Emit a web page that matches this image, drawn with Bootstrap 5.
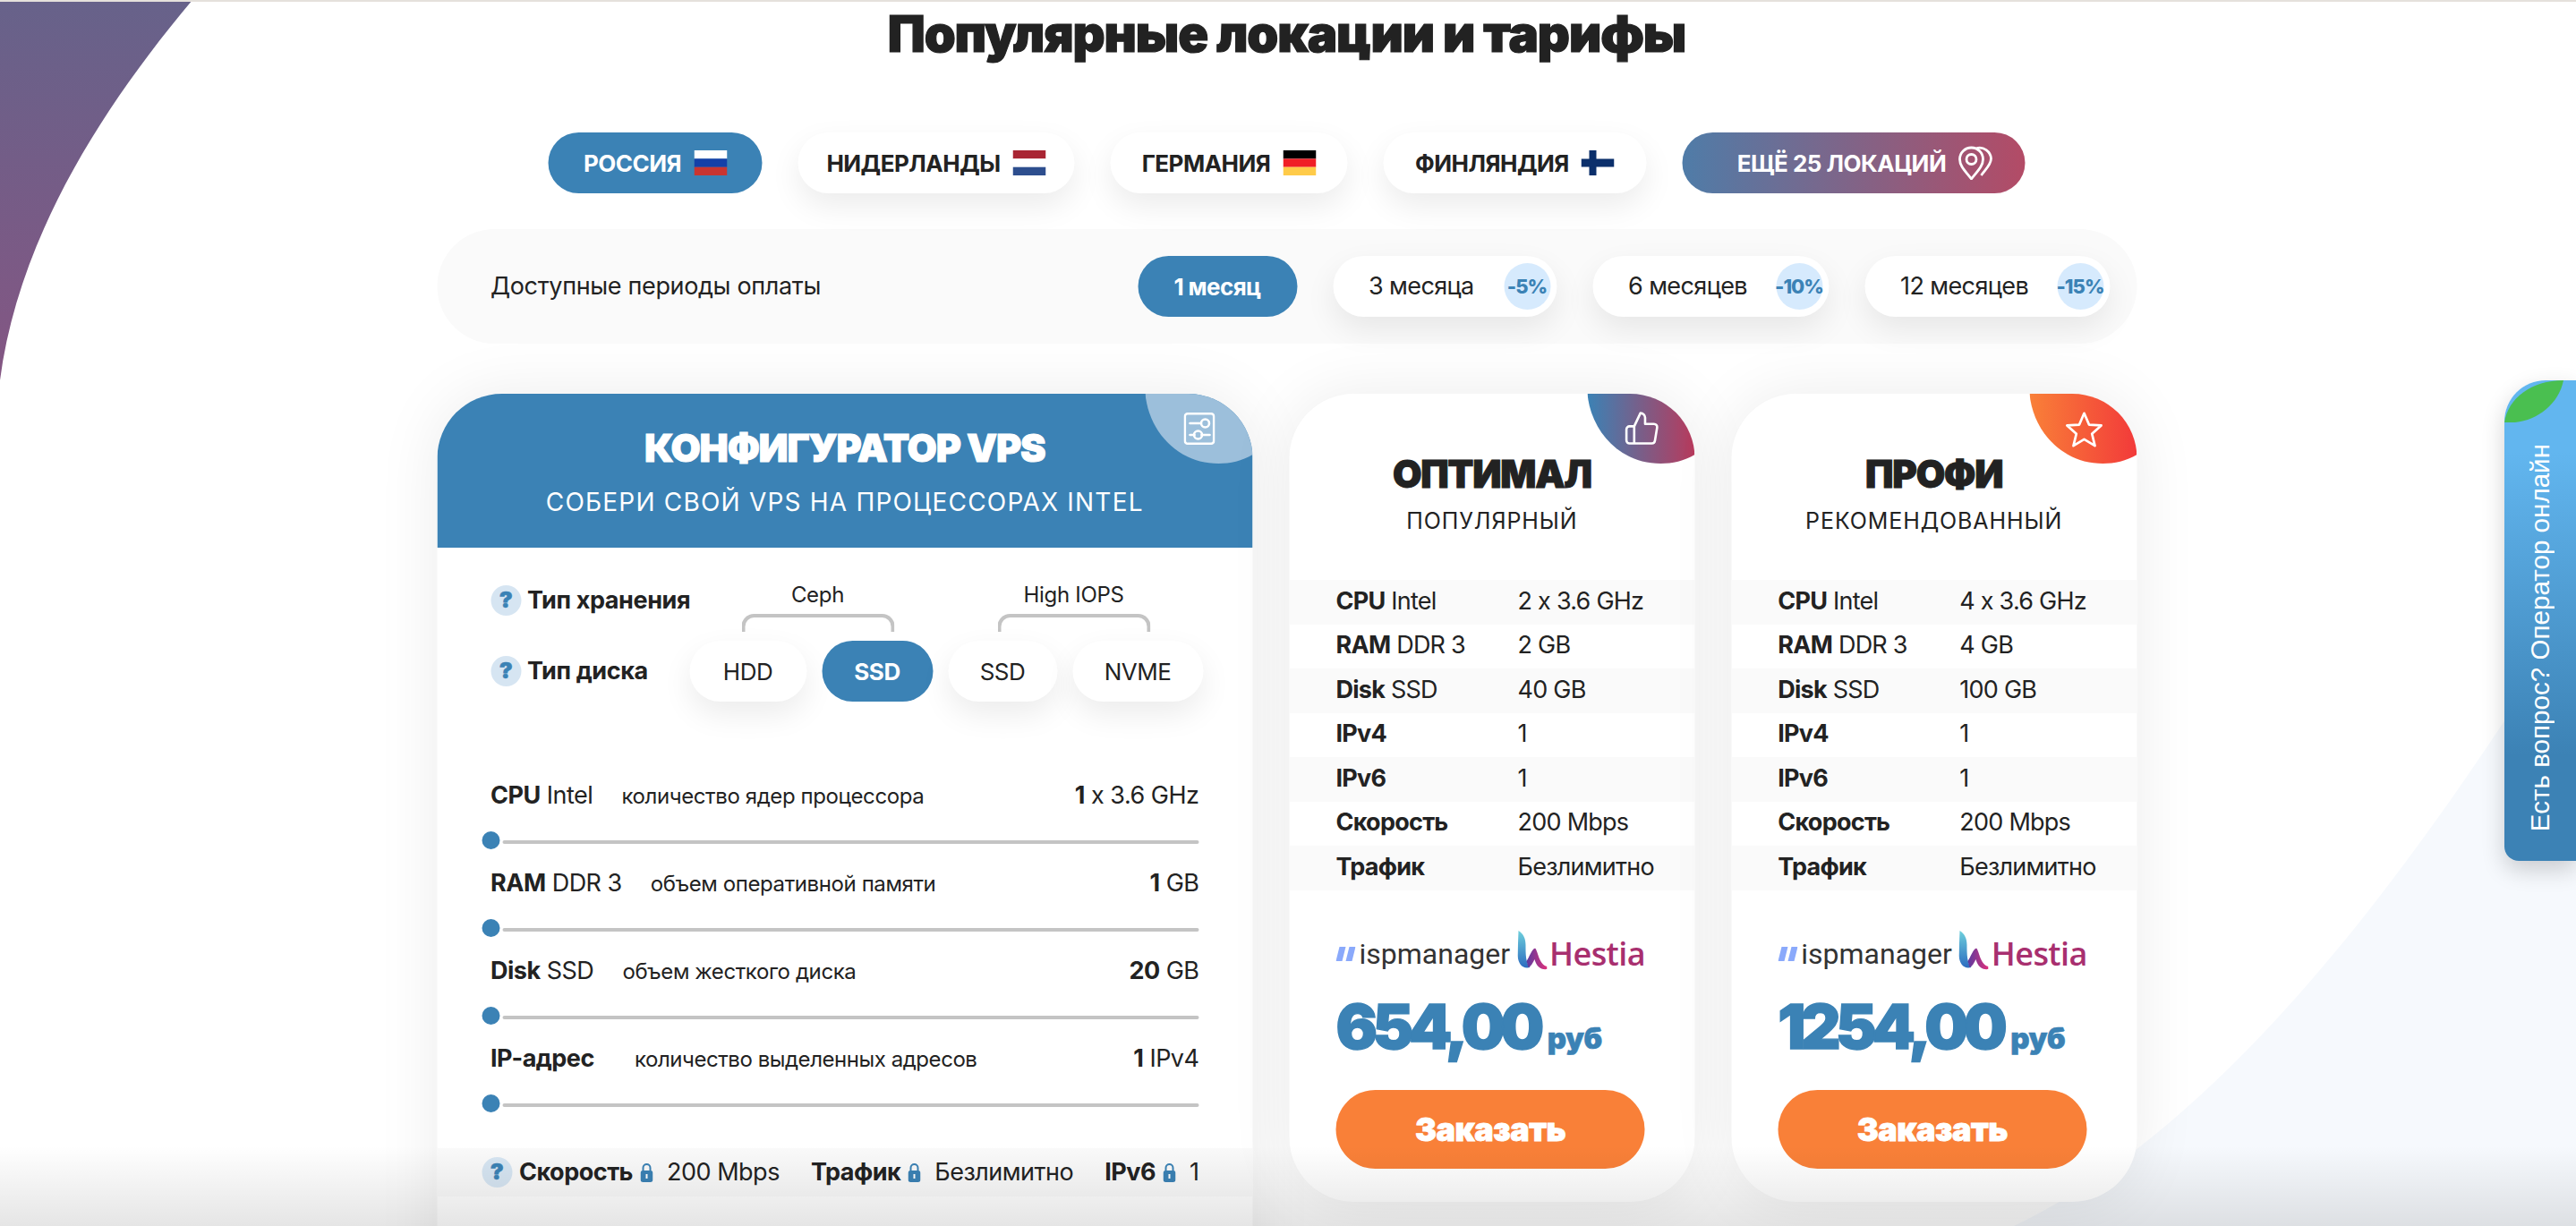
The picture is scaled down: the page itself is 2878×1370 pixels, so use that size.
<!DOCTYPE html>
<html lang="ru">
<head>
  <meta charset="UTF-8" />
  <title>Популярные локации и тарифы</title>
  <link href="https://cdn.jsdelivr.net/npm/bootstrap@5.3.0/dist/css/bootstrap.min.css" rel="stylesheet" />
  <style>
    html, body { height: 100%; overflow: hidden; }
    body {
      background: #fff;
      color: #222;
      font-family: Inter, "Noto Sans", sans-serif;
      position: relative;
    }
    .top-line { height: 2px; background: #e5e1dc; }
    .bg-shapes { position: absolute; left: 0; top: 0; width: 2878px; height: 1370px; z-index: 0; }
    .bottom-fade {
      position: absolute; left: 0; right: 0; bottom: 0; height: 90px; z-index: 5;
      background: linear-gradient(rgba(0,0,0,0), rgba(0,0,0,.1));
      pointer-events: none;
    }
    .page-wrap { width: 1899px; margin: 0 auto; padding-right: 0; position: relative; z-index: 1; transform: translateX(-1.5px); }
    .page-title {
      font-size: 56px; font-weight: 900; line-height: 72px; margin: 0; text-align: center; color: #222;
      letter-spacing: -1.1px; -webkit-text-stroke: 1.2px #222;
    }

    .pill {
      height: 68px; border-radius: 34px; background: #fff; border: 0; color: #222;
      box-shadow: 0 14px 34px rgba(0,0,0,.08);
      display: inline-flex; align-items: center; justify-content: center;
      white-space: nowrap; flex: none;
    }
    .pill-active { background: #3b82b5; color: #fff; box-shadow: none; }
    .loc-row { margin-top: 74px; gap: 40px; }
    .loc-pill { font-size: 26px; font-weight: 700; gap: 14px; letter-spacing: -.5px; }
    .loc-more { background: linear-gradient(90deg, #4f7ca8, #b34b66); color: #fff; box-shadow: none; padding-left: 25px; }
    .loc-more svg { margin-left: -1px; }
    .w-239 { width: 239px; } .w-309 { width: 309px; } .w-265 { width: 265px; } .w-294 { width: 294px; } .w-383 { width: 383px; }
    .flag { width: 37px; height: 28px; flex: none; display: block; }

    .period-band {
      margin-top: 40px; height: 128px; border-radius: 64px; background: #fafafa;
      padding: 0 30px 0 60px;
    }
    .period-label { font-size: 27px; letter-spacing: -.35px; }
    .period-list { gap: 40px; }
    .period-pill { font-size: 27px; padding: 0 7px 0 40px; justify-content: space-between; letter-spacing: -.6px; }
    .period-pill.pill-active { font-weight: 700; padding: 0; justify-content: center; font-size: 26px; }
    .w-178 { width: 178px; } .w-250 { width: 250px; } .w-264 { width: 264px; } .w-274 { width: 274px; }
    .sale-badge {
      width: 52px; height: 52px; border-radius: 50%; background: #d6eafd; color: #3b82b5;
      font-size: 22px; font-weight: 800; letter-spacing: -1px;
      display: flex; align-items: center; justify-content: center; flex: none;
    }

    .cards-row { margin-top: 56px; gap: 41px; align-items: flex-start; }
    .price-card {
      border: 0; border-radius: 72px; background: #fff; overflow: hidden;
      box-shadow: 0 0 70px rgba(0,0,0,.08);
    }
    .corner-leaf { position: absolute; top: 0; right: 0; width: 120px; height: 78px; }
    .corner-icon { position: absolute; }

    .config-card { width: 912px; height: 1100px; }
    .config-head { height: 172px; background: #3b82b5; color: #fff; text-align: center; padding-top: 38px; }
    .config-title { font-size: 43px; font-weight: 900; line-height: 44px; letter-spacing: -1.2px; -webkit-text-stroke: 1px #fff; }
    .config-sub { font-size: 28px; line-height: 34px; margin-top: 22px; letter-spacing: 1.2px; }
    .config-body { padding: 38px 60px 0; }
    .help-dot {
      width: 34px; height: 34px; border-radius: 50%; background: #d6e5f2; color: #3b82b5;
      font-size: 25px; font-weight: 900; -webkit-text-stroke: .6px #3b82b5; display: inline-flex; align-items: center; justify-content: center; flex: none;
    }
    .opt-label { font-size: 27px; font-weight: 700; gap: 7px; width: 222px; letter-spacing: -.4px; height: 34px; flex: none; white-space: nowrap; }
    .store-group { width: 171px; text-align: center; font-size: 24px; line-height: 30px; letter-spacing: -.3px; white-space: nowrap; }
    .store-bracket { height: 20px; margin-top: 6px; border: 4px solid #c4c4c4; border-bottom: 0; border-radius: 14px 14px 0 0; }
    .disk-row { margin-top: 10px; }
    .disk-list { gap: 17px; }
    .disk-pill { font-size: 26px; letter-spacing: -.5px; }
    .disk-pill.pill-active { font-weight: 700; }
    .w-131 { width: 131px; } .w-124 { width: 124px; } .w-122 { width: 122px; } .w-146 { width: 146px; }

    .sliders { margin-top: 87px; }
    .slider-row { margin-bottom: 20px; }
    .slider-text { height: 36px; font-size: 27px; line-height: 36px; white-space: nowrap; letter-spacing: -.5px; }
    .slider-text b { font-weight: 700; }
    .slider-desc { font-size: 24px; margin-left: 25px; letter-spacing: -.4px; }
    .slider-desc-wide { margin-left: 38px; letter-spacing: -.45px; }
    .slider-line { margin-top: 22px; margin-left: -10px; gap: 3px; }
    .slider-thumb { width: 20px; height: 20px; border-radius: 50%; background: #3b82b5; flex: none; }
    .slider-track { height: 4px; background: #c4c4c4; border-radius: 2px; flex-grow: 1; margin-top: 4px; }
    .config-foot {
      height: 54px; margin-top: 20px; background: #fafafa; padding: 0 60px 0 50px;
      font-size: 27px; white-space: nowrap; letter-spacing: -.5px;
    }
    .config-foot b { font-weight: 700; }
    .lock-ico { width: 14px; height: 22px; flex: none; }

    .plan-card { width: 453px; height: 903px; padding-top: 68px; }
    .plan-title { font-size: 42px; font-weight: 900; line-height: 44px; text-align: center; letter-spacing: -1.2px; -webkit-text-stroke: 1px #222; }
    .plan-sub { font-size: 25px; line-height: 44px; margin-top: 8px; text-align: center; letter-spacing: .9px; }
    .spec-list { margin-top: 44px; }
    .spec-line { height: 49.5px; padding-left: 52px; padding-bottom: 2px; font-size: 27px; white-space: nowrap; letter-spacing: -.75px; }
    .spec-line:nth-child(odd) { background: #fafafa; }
    .spec-line b { font-weight: 700; }
    .spec-name { width: 203px; flex: none; }
    .plan-foot { padding: 45px 52px 0; }
    .panel-logos { height: 44px; white-space: nowrap; }
    .isp-name { font-family: Roboto, sans-serif; font-size: 32px; color: #333; margin-left: 4px; line-height: 44px; padding-top: 8px; }
    .hestia-name { font-family: "Open Sans", sans-serif; font-weight: 600; font-size: 36px; color: #a82f6f; margin-left: 3px; letter-spacing: -.6px; line-height: 44px; padding-top: 8px; }
    .plan-price { margin-top: 25px; color: #3b82b5; font-weight: 900; font-size: 69px; line-height: 76px; white-space: nowrap; letter-spacing: -5.5px; -webkit-text-stroke: 1.4px #3b82b5; }
    .plan-price span { font-size: 33px; letter-spacing: -.5px; margin-left: 9px; -webkit-text-stroke: .6px #3b82b5; }
    .order-btn {
      margin-top: 20px; width: 345px; height: 88px; border-radius: 44px; border: 0;
      background: #f98038; color: #fff; font-size: 36px; font-weight: 900; letter-spacing: -.5px; -webkit-text-stroke: .8px #fff;
    }
    .order-btn:hover { background: #f98038; color: #fff; }

    .chat-tab {
      position: absolute; right: 0; top: 425px; width: 80px; height: 537px; z-index: 3;
      border-radius: 46px 0 0 16px; overflow: hidden;
      background: linear-gradient(#62b6ef 15%, #3c82b5 78%);
      box-shadow: 0 10px 26px rgba(0,0,0,.18);
      display: flex; align-items: flex-end; justify-content: center;
    }
    .chat-leaf { position: absolute; left: 0; top: 0; width: 66px; height: 47px; }
    .chat-text {
      writing-mode: vertical-rl; transform: rotate(180deg);
      color: #fff; font-family: "Liberation Sans", Arial, sans-serif; font-size: 29.6px; line-height: 40px;
      margin-bottom: 33px; white-space: nowrap;
    }
  </style>
</head>
<body>
  <svg class="bg-shapes" viewBox="0 0 2878 1370" aria-hidden="true">
    <defs>
      <linearGradient id="purpleBg" x1="0" y1="0" x2="0" y2="1">
        <stop offset="0" stop-color="#67628a" /><stop offset="1" stop-color="#845683" />
      </linearGradient>
    </defs>
    <path d="M0 0H215C110 125 20 270 0 425Z" fill="url(#purpleBg)" />
    <path d="M2250 1370C2480 1260 2690 985 2878 680V1370Z" fill="#f6f9fd" />
  </svg>

  <div class="top-line position-relative"></div>

  <div class="page-wrap">
    <h1 class="page-title">Популярные локации и тарифы</h1>

    <div class="loc-row d-flex justify-content-center">
      <a class="pill loc-pill w-239 pill-active text-decoration-none">РОССИЯ
        <svg class="flag" viewBox="0 0 37 28"><rect width="37" height="9.4" fill="#fff" /><rect y="9.4" width="37" height="9.3" fill="#1440a8" /><rect y="18.7" width="37" height="9.3" fill="#c93530" /></svg>
      </a>
      <a class="pill loc-pill w-309 text-decoration-none">НИДЕРЛАНДЫ
        <svg class="flag" viewBox="0 0 37 28"><rect width="37" height="9.4" fill="#a92533" /><rect y="9.4" width="37" height="9.3" fill="#fff" /><rect y="18.7" width="37" height="9.3" fill="#2d4e8e" /></svg>
      </a>
      <a class="pill loc-pill w-265 text-decoration-none">ГЕРМАНИЯ
        <svg class="flag" viewBox="0 0 37 28"><rect width="37" height="9.4" fill="#000" /><rect y="9.4" width="37" height="9.3" fill="#f01f26" /><rect y="18.7" width="37" height="9.3" fill="#ffcb49" /></svg>
      </a>
      <a class="pill loc-pill w-294 text-decoration-none">ФИНЛЯНДИЯ
        <svg class="flag" viewBox="0 0 37 28"><rect width="37" height="28" fill="#fff" /><rect x="9" width="8" height="28" fill="#0b2f6b" /><rect y="9.5" width="37" height="9" fill="#0b2f6b" /></svg>
      </a>
      <a class="pill loc-pill loc-more w-383 text-decoration-none">ЕЩЁ 25 ЛОКАЦИЙ
        <svg width="39" height="38" viewBox="0 0 39 38" fill="none" stroke="#fff" stroke-width="2.8"><path d="M15 37C9 29 2 23 2 15A13 13 0 0 1 28 15C28 23 21 29 15 37Z" /><circle cx="15" cy="15" r="5.5" /><path d="M21 2.5A13 13 0 0 1 37 14C37 21 31 26 26 33" /></svg>
      </a>
    </div>

    <div class="period-band d-flex align-items-center justify-content-between">
      <div class="period-label">Доступные периоды оплаты</div>
      <div class="period-list d-flex">
        <a class="pill period-pill w-178 pill-active text-decoration-none">1 месяц</a>
        <a class="pill period-pill w-250 text-decoration-none">3 месяца <span class="sale-badge">-5%</span></a>
        <a class="pill period-pill w-264 text-decoration-none">6 месяцев <span class="sale-badge">-10%</span></a>
        <a class="pill period-pill w-274 text-decoration-none">12 месяцев <span class="sale-badge">-15%</span></a>
      </div>
    </div>

    <div class="cards-row d-flex">
      <div class="card price-card config-card position-relative">
        <div class="config-head">
          <div class="config-title">КОНФИГУРАТОР VPS</div>
          <div class="config-sub">СОБЕРИ СВОЙ VPS НА ПРОЦЕССОРАХ INTEL</div>
        </div>
        <svg class="corner-leaf" viewBox="0 0 120 78"><path d="M0 0H120V68C108 75 95 78 82 78C36 78 4 42 0 0Z" fill="#9cbfdb" /></svg>
        <svg class="corner-icon" style="left:834px;top:21px" width="35" height="36" viewBox="0 0 35 36" fill="none" stroke="#fff" stroke-width="2.6" stroke-linecap="round"><rect x="1.3" y="1.3" width="32.4" height="33.4" rx="3" /><path d="M7 12H19M12 25H7M20 25H29" /><circle cx="24" cy="12" r="4.5" /><circle cx="16" cy="25" r="4.5" /></svg>

        <div class="config-body">
          <div class="d-flex align-items-start">
            <div class="opt-label d-flex align-items-center mt-1"><span class="help-dot">?</span>Тип хранения</div>
            <div class="store-group" style="margin-left:58px">Ceph<div class="store-bracket"></div></div>
            <div class="store-group" style="margin-left:115px">High IOPS<div class="store-bracket"></div></div>
          </div>
          <div class="disk-row d-flex align-items-center">
            <div class="opt-label d-flex align-items-center"><span class="help-dot">?</span>Тип диска</div>
            <div class="disk-list d-flex">
              <a class="pill disk-pill w-131 text-decoration-none">HDD</a>
              <a class="pill disk-pill w-124 pill-active text-decoration-none">SSD</a>
              <a class="pill disk-pill w-122 text-decoration-none">SSD</a>
              <a class="pill disk-pill w-146 text-decoration-none">NVME</a>
            </div>
          </div>

          <div class="sliders">
            <div class="slider-row">
              <div class="slider-text d-flex align-items-baseline justify-content-between">
                <div><b>CPU</b> Intel <span class="slider-desc">количество ядер процессора</span></div>
                <div><b>1</b> x 3.6 GHz</div>
              </div>
              <div class="slider-line d-flex align-items-center"><div class="slider-thumb"></div><div class="slider-track"></div></div>
            </div>
            <div class="slider-row">
              <div class="slider-text d-flex align-items-baseline justify-content-between">
                <div><b>RAM</b> DDR 3 <span class="slider-desc">объем оперативной памяти</span></div>
                <div><b>1</b> GB</div>
              </div>
              <div class="slider-line d-flex align-items-center"><div class="slider-thumb"></div><div class="slider-track"></div></div>
            </div>
            <div class="slider-row">
              <div class="slider-text d-flex align-items-baseline justify-content-between">
                <div><b>Disk</b> SSD <span class="slider-desc">объем жесткого диска</span></div>
                <div><b>20</b> GB</div>
              </div>
              <div class="slider-line d-flex align-items-center"><div class="slider-thumb"></div><div class="slider-track"></div></div>
            </div>
            <div class="slider-row">
              <div class="slider-text d-flex align-items-baseline justify-content-between">
                <div><b>IP-адрес</b> <span class="slider-desc slider-desc-wide">количество выделенных адресов</span></div>
                <div><b>1</b> IPv4</div>
              </div>
              <div class="slider-line d-flex align-items-center"><div class="slider-thumb"></div><div class="slider-track"></div></div>
            </div>
          </div>
        </div>

        <div class="config-foot d-flex align-items-center justify-content-between">
          <div class="d-flex align-items-center gap-2"><span class="help-dot">?</span><b>Скорость</b>
            <svg class="lock-ico" viewBox="0 0 14 22"><path d="M3 10V6a4 4 0 0 1 8 0v4" fill="none" stroke="#3b82b5" stroke-width="2" /><rect y="9" width="14" height="13" rx="3" fill="#3b82b5" /><rect x="6" y="13" width="2" height="5" fill="#fff" /></svg>
            <span class="ms-2">200 Mbps</span></div>
          <div class="d-flex align-items-center gap-2"><b>Трафик</b>
            <svg class="lock-ico" viewBox="0 0 14 22"><path d="M3 10V6a4 4 0 0 1 8 0v4" fill="none" stroke="#3b82b5" stroke-width="2" /><rect y="9" width="14" height="13" rx="3" fill="#3b82b5" /><rect x="6" y="13" width="2" height="5" fill="#fff" /></svg>
            <span class="ms-2">Безлимитно</span></div>
          <div class="d-flex align-items-center gap-2"><b>IPv6</b>
            <svg class="lock-ico" viewBox="0 0 14 22"><path d="M3 10V6a4 4 0 0 1 8 0v4" fill="none" stroke="#3b82b5" stroke-width="2" /><rect y="9" width="14" height="13" rx="3" fill="#3b82b5" /><rect x="6" y="13" width="2" height="5" fill="#fff" /></svg>
            <span class="ms-2">1</span></div>
        </div>
      </div>

      <div class="card price-card plan-card position-relative">
        <svg class="corner-leaf" viewBox="0 0 120 78"><defs><linearGradient id="leafBlue" x1="0" y1="0" x2="1" y2="0"><stop offset="0" stop-color="#3b82b5" /><stop offset="1" stop-color="#b83a5c" /></linearGradient></defs><path d="M0 0H120V68C108 75 95 78 82 78C36 78 4 42 0 0Z" fill="url(#leafBlue)" /></svg>
        <svg class="corner-icon" style="left:373px;top:19px" width="42" height="40" viewBox="0 0 24 23" fill="none" stroke="#fff" stroke-width="1.5" stroke-linejoin="round" stroke-linecap="round"><path d="M14 8.5V4.5a3 3 0 0 0-3-3L7 10v11h11.3a2 2 0 0 0 2-1.7l1.4-8.5a2 2 0 0 0-2-2.3zM7 21H4a2 2 0 0 1-2-2v-7a2 2 0 0 1 2-2h3" /></svg>
        <div class="plan-title">ОПТИМАЛ</div>
        <div class="plan-sub">ПОПУЛЯРНЫЙ</div>
        <div class="spec-list">
          <div class="spec-line d-flex align-items-center"><div class="spec-name"><b>CPU</b> Intel</div><div>2 x 3.6 GHz</div></div>
          <div class="spec-line d-flex align-items-center"><div class="spec-name"><b>RAM</b> DDR 3</div><div>2 GB</div></div>
          <div class="spec-line d-flex align-items-center"><div class="spec-name"><b>Disk</b> SSD</div><div>40 GB</div></div>
          <div class="spec-line d-flex align-items-center"><div class="spec-name"><b>IPv4</b></div><div>1</div></div>
          <div class="spec-line d-flex align-items-center"><div class="spec-name"><b>IPv6</b></div><div>1</div></div>
          <div class="spec-line d-flex align-items-center"><div class="spec-name"><b>Скорость</b></div><div>200 Mbps</div></div>
          <div class="spec-line d-flex align-items-center"><div class="spec-name"><b>Трафик</b></div><div>Безлимитно</div></div>
        </div>
        <div class="plan-foot">
          <div class="panel-logos d-flex align-items-center">
            <svg width="22" height="16" viewBox="0 0 22 16" class="mt-2"><path d="M4 0H11L7 16H0ZM15 0H22L18 16H11Z" fill="#8aa9fb" /></svg>
            <span class="isp-name">ispmanager</span>
            <svg class="ms-2 flex-shrink-0" width="33" height="44" viewBox="0 0 33 44"><defs><linearGradient id="hestA" x1="0" y1="0" x2="0" y2="1"><stop offset="0" stop-color="#6ed0dc" /><stop offset="1" stop-color="#2c6cc0" /></linearGradient><linearGradient id="hestB" x1="0" y1="0" x2="1" y2="0"><stop offset="0" stop-color="#5a3aa0" /><stop offset="1" stop-color="#e0307a" /></linearGradient></defs><path d="M1 0C6 3 9 8 9 16C9 26 9 36 14 41C6 43 1 38 0 28Z" fill="url(#hestA)" /><path d="M10 34C13 30 17 18 20 20C23 24 24 38 33 40V43C26 44 21 40 19 32C17 36 15 40 12 41Z" fill="url(#hestB)" /></svg>
            <span class="hestia-name">Hestia</span>
          </div>
          <div class="plan-price">654,00<span>руб</span></div>
          <button class="btn order-btn" type="button">Заказать</button>
        </div>
      </div>

      <div class="card price-card plan-card position-relative">
        <svg class="corner-leaf" viewBox="0 0 120 78"><defs><linearGradient id="leafOrange" x1="0" y1="0" x2="1" y2="0"><stop offset="0" stop-color="#f98038" /><stop offset="1" stop-color="#f23a3a" /></linearGradient></defs><path d="M0 0H120V68C108 75 95 78 82 78C36 78 4 42 0 0Z" fill="url(#leafOrange)" /></svg>
        <svg class="corner-icon" style="left:372px;top:20px" width="44" height="40" viewBox="0 0 24 22" fill="none" stroke="#fff" stroke-width="1.5" stroke-linejoin="round"><polygon points="12 1 15 8 22.5 8.5 16.8 13.6 18.6 21 12 17 5.4 21 7.2 13.6 1.5 8.5 9 8" /></svg>
        <div class="plan-title">ПРОФИ</div>
        <div class="plan-sub">РЕКОМЕНДОВАННЫЙ</div>
        <div class="spec-list">
          <div class="spec-line d-flex align-items-center"><div class="spec-name"><b>CPU</b> Intel</div><div>4 x 3.6 GHz</div></div>
          <div class="spec-line d-flex align-items-center"><div class="spec-name"><b>RAM</b> DDR 3</div><div>4 GB</div></div>
          <div class="spec-line d-flex align-items-center"><div class="spec-name"><b>Disk</b> SSD</div><div>100 GB</div></div>
          <div class="spec-line d-flex align-items-center"><div class="spec-name"><b>IPv4</b></div><div>1</div></div>
          <div class="spec-line d-flex align-items-center"><div class="spec-name"><b>IPv6</b></div><div>1</div></div>
          <div class="spec-line d-flex align-items-center"><div class="spec-name"><b>Скорость</b></div><div>200 Mbps</div></div>
          <div class="spec-line d-flex align-items-center"><div class="spec-name"><b>Трафик</b></div><div>Безлимитно</div></div>
        </div>
        <div class="plan-foot">
          <div class="panel-logos d-flex align-items-center">
            <svg width="22" height="16" viewBox="0 0 22 16" class="mt-2"><path d="M4 0H11L7 16H0ZM15 0H22L18 16H11Z" fill="#8aa9fb" /></svg>
            <span class="isp-name">ispmanager</span>
            <svg class="ms-2 flex-shrink-0" width="33" height="44" viewBox="0 0 33 44"><path d="M1 0C6 3 9 8 9 16C9 26 9 36 14 41C6 43 1 38 0 28Z" fill="url(#hestA)" /><path d="M10 34C13 30 17 18 20 20C23 24 24 38 33 40V43C26 44 21 40 19 32C17 36 15 40 12 41Z" fill="url(#hestB)" /></svg>
            <span class="hestia-name">Hestia</span>
          </div>
          <div class="plan-price">1254,00<span>руб</span></div>
          <button class="btn order-btn" type="button">Заказать</button>
        </div>
      </div>
    </div>
  </div>

  <div class="chat-tab">
    <svg class="chat-leaf" viewBox="0 0 66 47"><path d="M0 47C4 20 30 0 66 0C60 30 30 50 0 47Z" fill="#4abf50" /></svg>
    <div class="chat-text">Есть вопрос? Оператор онлайн</div>
  </div>

  <div class="bottom-fade"></div>
  <script src="https://cdn.jsdelivr.net/npm/bootstrap@5.3.0/dist/js/bootstrap.bundle.min.js"></script>
</body>
</html>
